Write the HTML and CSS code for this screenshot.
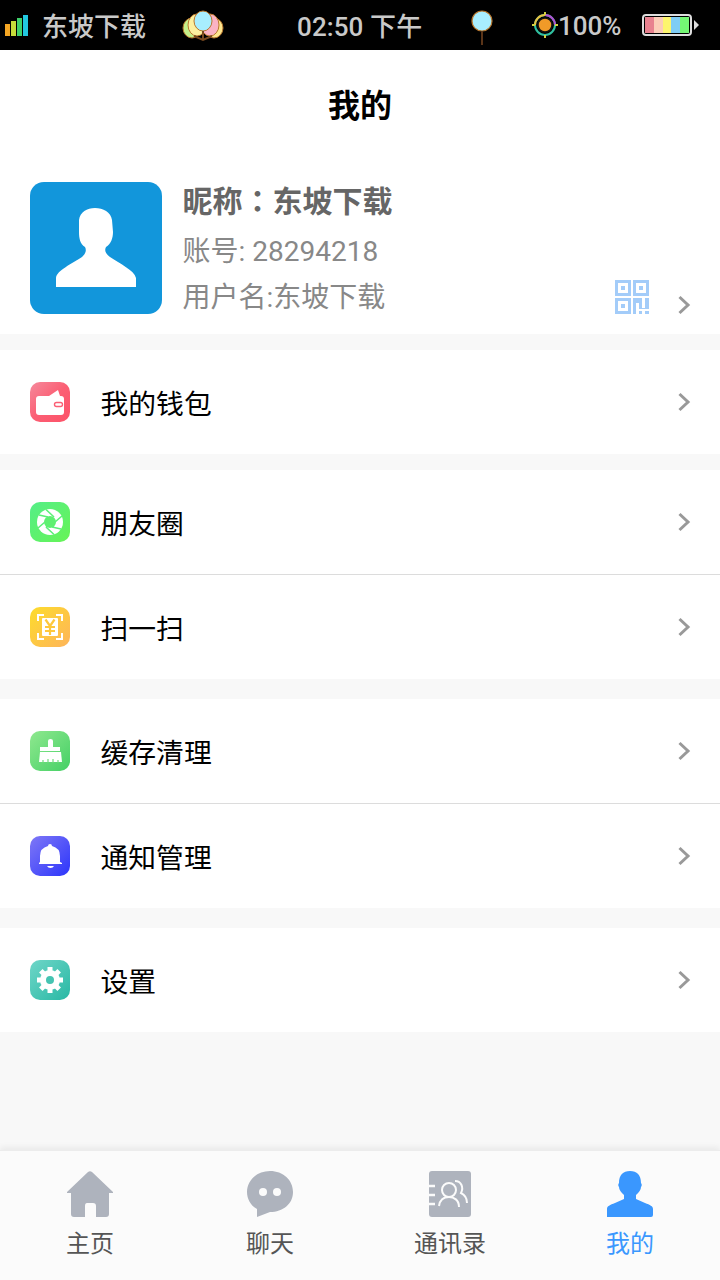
FILE: index.html
```html
<!DOCTYPE html>
<html lang="zh-CN">
  <head>
    <meta charset="UTF-8" />
    <meta name="viewport" content="width=device-width, initial-scale=1.0" />
    <title>我的</title>
    <link rel="stylesheet" href="styles.css">
  </head>
  <body>
    <section class="phone">
      <!-- status bar -->
      <div class="status">
        <svg class="s-signal" width="24" height="24" viewBox="0 0 24 24">
          <rect x="0" y="11" width="5" height="12" fill="#f5a623"/>
          <rect x="6" y="8" width="5" height="15" fill="#c6dc3a"/>
          <rect x="12" y="5" width="5" height="18" fill="#3fd06a"/>
          <rect x="18" y="2" width="5" height="21" fill="#22c8e0"/>
        </svg>
        <span class="s-carrier">东坡下载</span>
        <svg class="s-balloons" width="42" height="34" viewBox="0 0 42 34">
          <ellipse cx="10" cy="18" rx="9" ry="10" fill="#c5f08a" stroke="#b9772e"/>
          <ellipse cx="32" cy="18" rx="9" ry="10" fill="#fde68f" stroke="#b9772e"/>
          <ellipse cx="15" cy="15" rx="9" ry="11" fill="#fdf0a0" stroke="#b9772e"/>
          <ellipse cx="28" cy="15" rx="9" ry="11" fill="#fbb3c4" stroke="#b9772e"/>
          <ellipse cx="21" cy="11" rx="9" ry="10" fill="#a8eeff" stroke="#b9772e"/>
          <path d="M21 21 L21 30 M12 26 L21 30 L30 26" stroke="#7a4a20" stroke-width="2" fill="none"/>
        </svg>
        <span class="s-time">02:50 下午</span>
        <svg class="s-balloon" width="22" height="36" viewBox="0 0 22 36">
          <circle cx="11" cy="11" r="10" fill="#a8eeff" stroke="#b9772e" stroke-width="1.2"/>
          <path d="M11 21 L11 35" stroke="#5a3418" stroke-width="2"/>
        </svg>
        <svg class="s-target" width="26" height="26" viewBox="0 0 26 26">
          <circle cx="13" cy="13" r="10" fill="none" stroke="#30c0a0" stroke-width="2"/>
          <path d="M3 13 A10 10 0 0 1 13 3" fill="none" stroke="#e8c040" stroke-width="2"/>
          <path d="M13 3 A10 10 0 0 1 23 13" fill="none" stroke="#b050d0" stroke-width="2"/>
          <circle cx="13" cy="13" r="7" fill="#f09a28" stroke="#111" stroke-width="1.5"/>
          <path d="M13 0V3M13 23V26M0 13H3M23 13H26" stroke="#d0d040" stroke-width="2"/>
        </svg>
        <span class="s-level">100%</span>
        <div class="battery">
          <i class="b1"></i><i class="b2"></i><i class="b3"></i><i class="b4"></i><i class="b5"></i>
        </div>
        <span class="battery-tip"></span>
      </div>

      <h1 class="title">我的</h1>

      <!-- profile -->
      <div class="profile">
        <svg class="avatar" width="132" height="132" viewBox="0 0 132 132">
          <rect width="132" height="132" rx="14" fill="#1296db"/>
          <path d="M26 105 L26 96 C27 88 42 82 52 75 C55 72 57 69 55 65 C50 62 49 56 49 50 L49 38 C50 30 57 26 65 26 C73 26 81 30 82 38 L83 50 C83 56 81 62 76 65 C74 69 76 72 80 75 C90 82 104 88 106 96 L106 105 Z" fill="#fff"/>
        </svg>
        <div class="info">
          <!-- 繁体locale下全角冒号居中，和参考图一致 -->
          <div class="nick">昵称<span lang="zh-Hant">：</span>东坡下载</div>
          <div class="meta">账号: 28294218</div>
          <div class="meta">用户名:东坡下载</div>
        </div>
        <svg class="qr" width="34" height="34" viewBox="0 0 34 34" fill="#a3ccf9">
          <path fill-rule="evenodd" d="M0 0H16V16H0ZM3 3V13H13V3Z"/>
          <rect x="6" y="6" width="4" height="4"/>
          <path fill-rule="evenodd" d="M18 0H34V16H18ZM21 3V13H31V3Z"/>
          <rect x="24" y="6" width="4" height="4"/>
          <path fill-rule="evenodd" d="M0 18H16V34H0ZM3 21V31H13V21Z"/>
          <rect x="6" y="24" width="4" height="4"/>
          <path d="M18 18H27V28H30V18H34V29H24V23H21V34H18Z"/>
          <path d="M24 31H27V34H24ZM30 31H34V34H30Z"/>
        </svg>
        <svg class="arrow" width="14" height="20" viewBox="0 0 14 20"><path d="M2.5 2 L11 10 L2.5 18" fill="none" stroke="#999" stroke-width="3"/></svg>
      </div>

      <div class="group first">
        <div class="row">
          <svg class="ico" width="40" height="40" viewBox="0 0 40 40">
            <defs><linearGradient id="g1" x1="0" y1="0" x2="1" y2="1"><stop offset="0" stop-color="#f58a9c"/><stop offset=".5" stop-color="#fb5f74"/><stop offset="1" stop-color="#fd5268"/></linearGradient></defs>
            <rect width="40" height="40" rx="10" fill="url(#g1)"/>
            <path d="M19 14 L28 8 L30 14 Z" fill="#fff"/>
            <rect x="6" y="14" width="28" height="19" rx="3" fill="#fff"/>
            <rect x="24.5" y="20.5" width="8" height="4" rx="2" fill="#fff" stroke="#fb5f74" stroke-width="1.4"/>
          </svg>
          <span class="label">我的钱包</span>
          <svg class="arrow" width="14" height="20" viewBox="0 0 14 20"><path d="M2.5 2 L11 10 L2.5 18" fill="none" stroke="#999" stroke-width="3"/></svg>
        </div>
      </div>

      <div class="group">
        <div class="row">
          <svg class="ico" width="40" height="40" viewBox="0 0 40 40">
            <defs><linearGradient id="g2" x1="0" y1="0" x2="1" y2="1"><stop offset="0" stop-color="#55ee88"/><stop offset="1" stop-color="#66f455"/></linearGradient></defs>
            <rect width="40" height="40" rx="10" fill="url(#g2)"/>
            <circle cx="20" cy="20" r="13" fill="#fff"/>
            <circle cx="20" cy="20" r="6" fill="#5ef070"/>
            <path d="M16 7.5 L24 15 M32 14 L25 20 M31 27 L22 25 M24 32.5 L16 25 M8 26 L15 20 M9 13 L18 15" stroke="#5cf078" stroke-width="1.6"/>
          </svg>
          <span class="label">朋友圈</span>
          <svg class="arrow" width="14" height="20" viewBox="0 0 14 20"><path d="M2.5 2 L11 10 L2.5 18" fill="none" stroke="#999" stroke-width="3"/></svg>
        </div>
        <div class="row line">
          <svg class="ico" width="40" height="40" viewBox="0 0 40 40">
            <defs><linearGradient id="g3" x1="0" y1="0" x2="1" y2="1"><stop offset="0" stop-color="#fddc2c"/><stop offset="1" stop-color="#feb45a"/></linearGradient></defs>
            <rect width="40" height="40" rx="10" fill="url(#g3)"/>
            <path d="M8 14V8H14M26 8H32V14M32 26V32H26M14 32H8V26" fill="none" stroke="#fff" stroke-width="2"/>
            <rect x="12" y="11" width="16" height="18" rx="1" fill="#fff"/>
            <path d="M15.5 12.5 L20 19 L24.5 12.5 M20 19 V28 M15 20 H25 M15 24 H25" fill="none" stroke="#fec83c" stroke-width="2.2"/>
          </svg>
          <span class="label">扫一扫</span>
          <svg class="arrow" width="14" height="20" viewBox="0 0 14 20"><path d="M2.5 2 L11 10 L2.5 18" fill="none" stroke="#999" stroke-width="3"/></svg>
        </div>
      </div>

      <div class="group wide">
        <div class="row">
          <svg class="ico" width="40" height="40" viewBox="0 0 40 40">
            <defs><linearGradient id="g4" x1="0" y1="0" x2="1" y2="1"><stop offset="0" stop-color="#8fe88f"/><stop offset="1" stop-color="#45d065"/></linearGradient></defs>
            <rect width="40" height="40" rx="10" fill="url(#g4)"/>
            <path d="M18 10 Q18 8 20.5 8 Q23 8 23 10 V16 H30 V20 H10 V16 H18 Z" fill="#fff"/>
            <path d="M10 21 H31 L32 31 H9 Z" fill="#fff"/>
            <path d="M13 32V29M18 32V28M23 32V28M28 32V29" stroke="#6fdc7c" stroke-width="1.2"/>
          </svg>
          <span class="label">缓存清理</span>
          <svg class="arrow" width="14" height="20" viewBox="0 0 14 20"><path d="M2.5 2 L11 10 L2.5 18" fill="none" stroke="#999" stroke-width="3"/></svg>
        </div>
        <div class="row line">
          <svg class="ico" width="40" height="40" viewBox="0 0 40 40">
            <defs><linearGradient id="g5" x1="0" y1="0" x2="1" y2="1"><stop offset="0" stop-color="#7f78f6"/><stop offset="1" stop-color="#2c35fb"/></linearGradient></defs>
            <rect width="40" height="40" rx="10" fill="url(#g5)"/>
            <path d="M20 8 Q22 8 22 10 Q30 12 30 20 V26 L32 27 V28 H9 V27 L10 26 V20 Q10 12 18 10 Q18 8 20 8 Z" fill="#fff"/>
            <path d="M17 30 H24 Q23 32 20.5 32 Q18 32 17 30 Z" fill="#fff"/>
          </svg>
          <span class="label">通知管理</span>
          <svg class="arrow" width="14" height="20" viewBox="0 0 14 20"><path d="M2.5 2 L11 10 L2.5 18" fill="none" stroke="#999" stroke-width="3"/></svg>
        </div>
      </div>

      <div class="group wide">
        <div class="row">
          <svg class="ico" width="40" height="40" viewBox="0 0 40 40">
            <defs><linearGradient id="g6" x1="0" y1="0" x2="1" y2="1"><stop offset="0" stop-color="#6fd6c8"/><stop offset="1" stop-color="#28b8a4"/></linearGradient></defs>
            <rect width="40" height="40" rx="10" fill="url(#g6)"/>
            <circle cx="20" cy="20" r="10" fill="#fff"/>
            <g stroke="#fff" stroke-width="5">
              <path d="M20 7V33M7 20H33M10.8 10.8L29.2 29.2M10.8 29.2L29.2 10.8"/>
            </g>
            <circle cx="20" cy="20" r="4" fill="#45c4b2"/>
          </svg>
          <span class="label">设置</span>
          <svg class="arrow" width="14" height="20" viewBox="0 0 14 20"><path d="M2.5 2 L11 10 L2.5 18" fill="none" stroke="#999" stroke-width="3"/></svg>
        </div>
      </div>

      <!-- tab bar -->
      <nav class="tabs">
        <div class="tab">
          <svg width="46" height="46" viewBox="0 0 46 46" fill="#aeb3bd">
            <path fill-rule="evenodd" d="M21 1 Q23 -0.5 25 1 L46 21 V22 H42 V43 Q42 46 39 46 H29 V35 Q29 32 26 32 H20 Q18 32 18 35 V46 H7 Q4 46 4 43 V22 H0 V21 Z"/>
          </svg>
          <span>主页</span>
        </div>
        <div class="tab">
          <svg width="46" height="46" viewBox="0 0 46 46">
            <path d="M23 0 C36 0 46 9 46 21 C46 33 36 41 23 41 L10 46 L10 38 C4 35 0 28 0 21 C0 9 10 0 23 0 Z" fill="#aeb3bd"/>
            <circle cx="16" cy="21" r="4" fill="#fbfbfb"/>
            <circle cx="30" cy="21" r="4" fill="#fbfbfb"/>
          </svg>
          <span>聊天</span>
        </div>
        <div class="tab">
          <svg width="46" height="46" viewBox="0 0 46 46">
            <rect x="2" width="42" height="46" rx="3" fill="#aeb3bd"/>
            <path d="M2 15H8M2 24H8M2 33H8" stroke="#fbfbfb" stroke-width="2.5"/>
            <g fill="none" stroke="#fbfbfb" stroke-width="2">
              <circle cx="22" cy="19" r="7"/>
              <path d="M12 35 C13 28 18 26 22 26 C27 26 32 29 32 36"/>
              <path d="M28 10 C34 10 37 16 34 22 C38 24 40 27 40 32"/>
            </g>
          </svg>
          <span>通讯录</span>
        </div>
        <div class="tab on">
          <svg width="46" height="46" viewBox="0 0 46 46" fill="#3a97fe">
            <path d="M0 46 V38 C0 35 3 34 8 32 L17 28 V24 C14 21 12 19 12 16 C11 15 11 13 12 12 C12 4 16 0 23 0 C30 0 34 4 34 12 C35 13 35 15 34 16 C34 19 32 21 29 24 V28 L38 32 C43 34 46 35 46 38 V44 Q46 46 44 46 Z"/>
          </svg>
          <span>我的</span>
        </div>
      </nav>
    </section>
  </body>
</html>
```

FILE: styles.css
```css
* {
  box-sizing: border-box;
}
html,
body {
  margin: 0;
  padding: 0;
}
body {
  font-family: Roboto, "Noto Sans CJK SC", sans-serif;
  background-color: #f8f8f8;
}
.phone {
  width: 720px;
  height: 1280px;
  display: flex;
  flex-direction: column;
  overflow: hidden;
}

/* status bar */
.status {
  height: 50px;
  background-color: #000;
  color: #c9c9c9;
  display: flex;
  align-items: center;
  font-size: 26px;
  font-weight: 500;
}
.s-signal {
  margin-left: 5px;
}
.s-carrier {
  margin-left: 13px;
  margin-top: -2px;
  width: 104px;
  white-space: nowrap;
}
.s-balloons {
  margin-left: 36px;
  margin-top: 4px;
}
.s-time {
  margin-left: 73px;
  margin-top: -2px;
  width: 126px;
  white-space: nowrap;
  letter-spacing: 0.1px;
}
.s-balloon {
  margin-left: 48px;
  margin-top: 6px;
}
.s-target {
  margin-left: 39px;
}
.s-level {
  margin-top: 2px;
  width: 64px;
  white-space: nowrap;
}
.battery {
  margin-left: 20px;
  width: 50px;
  height: 22px;
  border: 2px solid #ddd;
  border-radius: 4px;
  padding: 1px;
  display: flex;
}
.battery i {
  flex: 1;
}
.b1 {
  background-color: #e8818f;
}
.b2 {
  background-color: #fcccb8;
}
.b3 {
  background-color: #fdf56e;
}
.b4 {
  background-color: #7fcdf5;
}
.b5 {
  background-color: #74f774;
}
.battery-tip {
  margin-left: 2px;
  width: 5px;
  height: 10px;
  background-color: #ddd;
  clip-path: polygon(0 0, 100% 50%, 0 100%);
}

.title {
  margin: 0;
  height: 110px;
  padding-top: 34px;
  background-color: #fff;
  color: #000;
  font-size: 32px;
  line-height: 44px;
  font-weight: 700;
  text-align: center;
}

/* profile */
.profile {
  height: 174px;
  padding: 22px 29px 20px 30px;
  background-color: #fff;
  display: flex;
}
.avatar {
  flex-shrink: 0;
}
.info {
  margin-left: 20.5px;
  flex: 1;
}
.nick {
  margin-bottom: 10px;
  font-size: 30px;
  line-height: 40px;
  font-weight: 700;
  color: #666;
}
.meta {
  margin-bottom: 6px;
  font-size: 28px;
  line-height: 40px;
  color: #888;
}
.qr {
  align-self: flex-end;
}
.profile .arrow {
  align-self: flex-end;
  margin-left: 28px;
  margin-bottom: -1px;
}

/* list */
.group {
  margin-top: 16px;
  background-color: #fff;
}
.wide {
  margin-top: 20px;
}
.row {
  height: 104px;
  padding: 0 29px 0 30px;
  display: flex;
  align-items: center;
}
.line {
  height: 105px;
  border-top: 1px solid #dcdcdc;
}
.label {
  margin-left: 30.5px;
  flex: 1;
  font-size: 27.8px;
  color: #000;
}

/* tab bar */
.tabs {
  margin-top: auto;
  height: 130px;
  background-color: #fbfbfb;
  border-top: 1px solid #ececec;
  box-shadow: 0 -3px 6px rgba(0, 0, 0, 0.06);
  display: flex;
}
.tab {
  flex: 1;
  padding-top: 20px;
  display: flex;
  flex-direction: column;
  align-items: center;
  font-size: 24px;
  line-height: 34px;
  color: #555;
}
.tab span {
  margin-top: 10px;
}
.on {
  color: #3a97fe;
}
```
